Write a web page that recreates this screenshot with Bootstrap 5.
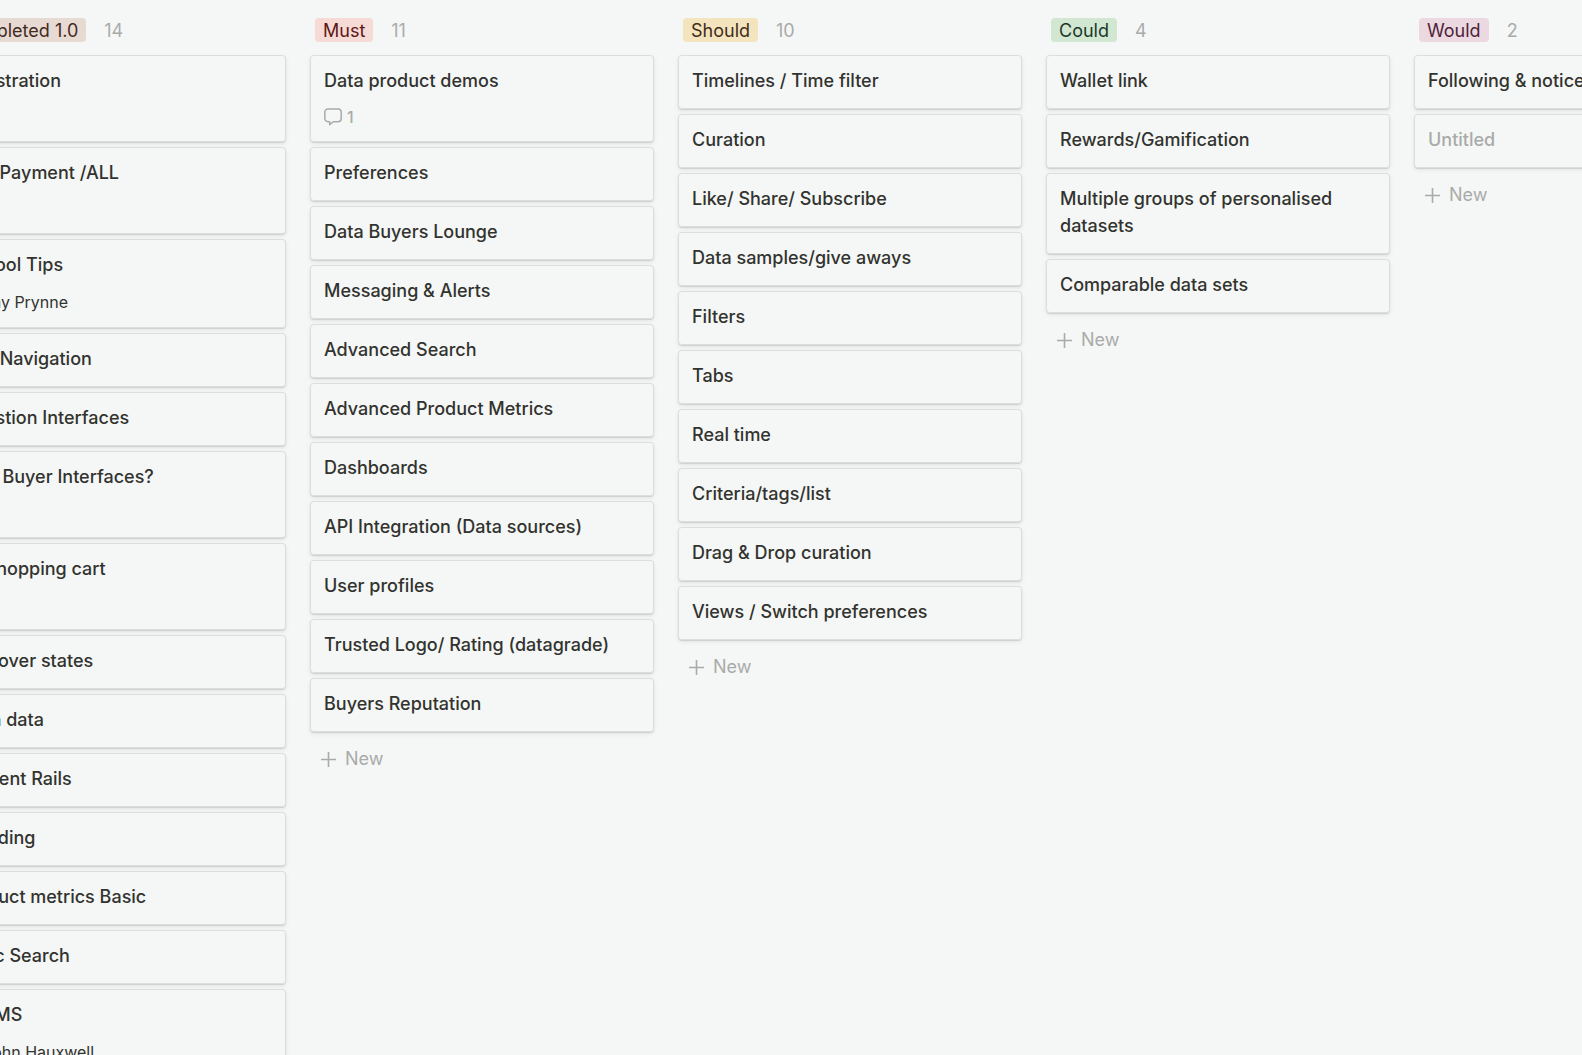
<!DOCTYPE html>
<html lang="en">
<head>
<meta charset="utf-8">
<meta name="viewport" content="width=device-width, initial-scale=1">
<title>Feature board</title>
<link href="https://cdn.jsdelivr.net/npm/bootstrap@5.3.0/dist/css/bootstrap.min.css" rel="stylesheet">
<style>
  body { background: #f5f7f6; color: #32332f; font-family: Inter, "Liberation Sans", sans-serif; font-size: 18px; line-height: 27px; }
  .board { height: 100vh; overflow: hidden; padding-top: 16px; }
  /* the board is scrolled part-way past its first column */
  .board-track { gap: 24px; margin-left: -56px; }
  .board-col { width: 344px; }
  .board-col:first-child { width: 342px; }
  .col-head { height: 28px; margin-bottom: 11px; padding-left: 5px; gap: 18px; }
  .tag { font-size: 18px; line-height: 23px; padding: 1px 8px 0; border-radius: 4px; }
  .tag-brown { background: #e6dad3; color: #442a1e; }
  .tag-red { background: #f6dad6; color: #5d1715; }
  .tag-yellow { background: #f4e4bd; color: #402c1b; }
  .tag-green { background: #d1e7d2; color: #1c3829; }
  .tag-pink { background: #ecd8e1; color: #4c2337; }
  .tally, .add-new, .untitled, .comments { color: #a9aba9; }
  .card-list { gap: 5px; }
  .item { background: #f5f7f6; color: inherit; border: 0; border-radius: 4px; padding: 12px 14px 15px; box-shadow: inset 0 0 0 1px #dcdedd, 0 1px 1px #cfd1d0, 0 2px 4px #e3e5e4; }
  .item-title { font-size: 18px; line-height: 27px; font-weight: 500; margin: 0; }
  .item-meta { font-size: 16px; line-height: 20px; height: 20px; margin-top: 13px; gap: 5px; }
  .item-meta.person { height: 22px; }
  .comments { font-weight: 500; }
  .avatar { width: 20px; height: 20px; border-radius: 50%; background: #cfd1cf; }
  .add-new { background: none; border: 0; padding: 0 10px; margin-top: 13px; gap: 8px; line-height: 28px; }
</style>
</head>
<body>
<main class="board">
  <div class="board-track d-flex align-items-start">

    <section class="board-col flex-shrink-0">
      <header class="col-head d-flex align-items-center"><span class="tag tag-brown">Completed 1.0</span><span class="tally">14</span></header>
      <div class="card-list d-flex flex-column">
        <article class="card item"><h2 class="item-title">Registration</h2><div class="item-meta"></div></article>
        <article class="card item"><h2 class="item-title">Cart Payment /ALL</h2><div class="item-meta"></div></article>
        <article class="card item"><h2 class="item-title">All Tool Tips</h2><div class="item-meta person d-flex align-items-center"><span class="avatar"></span>Jay Prynne</div></article>
        <article class="card item"><h2 class="item-title">App/Navigation</h2></article>
        <article class="card item"><h2 class="item-title">Ingestion Interfaces</h2></article>
        <article class="card item"><h2 class="item-title">Data Buyer Interfaces?</h2><div class="item-meta"></div></article>
        <article class="card item"><h2 class="item-title">All Shopping cart</h2><div class="item-meta"></div></article>
        <article class="card item"><h2 class="item-title">All Hover states</h2></article>
        <article class="card item"><h2 class="item-title">Meta data</h2></article>
        <article class="card item"><h2 class="item-title">Content Rails</h2></article>
        <article class="card item"><h2 class="item-title">Branding</h2></article>
        <article class="card item"><h2 class="item-title">Product metrics Basic</h2></article>
        <article class="card item"><h2 class="item-title">Basic Search</h2></article>
        <article class="card item"><h2 class="item-title">UI CMS</h2><div class="item-meta person d-flex align-items-center"><span class="avatar"></span>John Hauxwell</div></article>
      </div>
    </section>

    <section class="board-col flex-shrink-0">
      <header class="col-head d-flex align-items-center"><span class="tag tag-red">Must</span><span class="tally">11</span></header>
      <div class="card-list d-flex flex-column">
        <article class="card item"><h2 class="item-title">Data product demos</h2>
          <div class="item-meta comments d-flex align-items-center">
            <svg width="18" height="18" viewBox="0 0 18 18" fill="none" stroke="currentColor" stroke-width="1.5" stroke-linejoin="round" aria-hidden="true"><path d="M4 1h10a3.200 3.200 0 0 1 3.200 3.200v6.300a3.200 3.200 0 0 1-3.200 3.200H9.200L5.700 16.800v-3.100H4a3.200 3.200 0 0 1-3.200-3.200V4.200A3.200 3.200 0 0 1 4 1z"/></svg>
            <span>1</span>
          </div>
        </article>
        <article class="card item"><h2 class="item-title">Preferences</h2></article>
        <article class="card item"><h2 class="item-title">Data Buyers Lounge</h2></article>
        <article class="card item"><h2 class="item-title">Messaging &amp; Alerts</h2></article>
        <article class="card item"><h2 class="item-title">Advanced Search</h2></article>
        <article class="card item"><h2 class="item-title">Advanced Product Metrics</h2></article>
        <article class="card item"><h2 class="item-title">Dashboards</h2></article>
        <article class="card item"><h2 class="item-title">API Integration (Data sources)</h2></article>
        <article class="card item"><h2 class="item-title">User profiles</h2></article>
        <article class="card item"><h2 class="item-title">Trusted Logo/ Rating (datagrade)</h2></article>
        <article class="card item"><h2 class="item-title">Buyers Reputation</h2></article>
      </div>
      <button type="button" class="add-new d-flex align-items-center"><svg width="17" height="17" viewBox="0 0 17 17" stroke="currentColor" stroke-width="1.6" aria-hidden="true"><path d="M8.500 1v15M1 8.500h15"/></svg>New</button>
    </section>

    <section class="board-col flex-shrink-0">
      <header class="col-head d-flex align-items-center"><span class="tag tag-yellow">Should</span><span class="tally">10</span></header>
      <div class="card-list d-flex flex-column">
        <article class="card item"><h2 class="item-title">Timelines / Time filter</h2></article>
        <article class="card item"><h2 class="item-title">Curation</h2></article>
        <article class="card item"><h2 class="item-title">Like/ Share/ Subscribe</h2></article>
        <article class="card item"><h2 class="item-title">Data samples/give aways</h2></article>
        <article class="card item"><h2 class="item-title">Filters</h2></article>
        <article class="card item"><h2 class="item-title">Tabs</h2></article>
        <article class="card item"><h2 class="item-title">Real time</h2></article>
        <article class="card item"><h2 class="item-title">Criteria/tags/list</h2></article>
        <article class="card item"><h2 class="item-title">Drag &amp; Drop curation</h2></article>
        <article class="card item"><h2 class="item-title">Views / Switch preferences</h2></article>
      </div>
      <button type="button" class="add-new d-flex align-items-center"><svg width="17" height="17" viewBox="0 0 17 17" stroke="currentColor" stroke-width="1.6" aria-hidden="true"><path d="M8.500 1v15M1 8.500h15"/></svg>New</button>
    </section>

    <section class="board-col flex-shrink-0">
      <header class="col-head d-flex align-items-center"><span class="tag tag-green">Could</span><span class="tally">4</span></header>
      <div class="card-list d-flex flex-column">
        <article class="card item"><h2 class="item-title">Wallet link</h2></article>
        <article class="card item"><h2 class="item-title">Rewards/Gamification</h2></article>
        <article class="card item"><h2 class="item-title">Multiple groups of personalised datasets</h2></article>
        <article class="card item"><h2 class="item-title">Comparable data sets</h2></article>
      </div>
      <button type="button" class="add-new d-flex align-items-center"><svg width="17" height="17" viewBox="0 0 17 17" stroke="currentColor" stroke-width="1.6" aria-hidden="true"><path d="M8.500 1v15M1 8.500h15"/></svg>New</button>
    </section>

    <section class="board-col flex-shrink-0">
      <header class="col-head d-flex align-items-center"><span class="tag tag-pink">Would</span><span class="tally">2</span></header>
      <div class="card-list d-flex flex-column">
        <article class="card item"><h2 class="item-title">Following &amp; notices</h2></article>
        <article class="card item"><h2 class="item-title untitled">Untitled</h2></article>
      </div>
      <button type="button" class="add-new d-flex align-items-center"><svg width="17" height="17" viewBox="0 0 17 17" stroke="currentColor" stroke-width="1.6" aria-hidden="true"><path d="M8.500 1v15M1 8.500h15"/></svg>New</button>
    </section>

  </div>
</main>
<script src="https://cdn.jsdelivr.net/npm/bootstrap@5.3.0/dist/js/bootstrap.bundle.min.js"></script>
</body>
</html>
